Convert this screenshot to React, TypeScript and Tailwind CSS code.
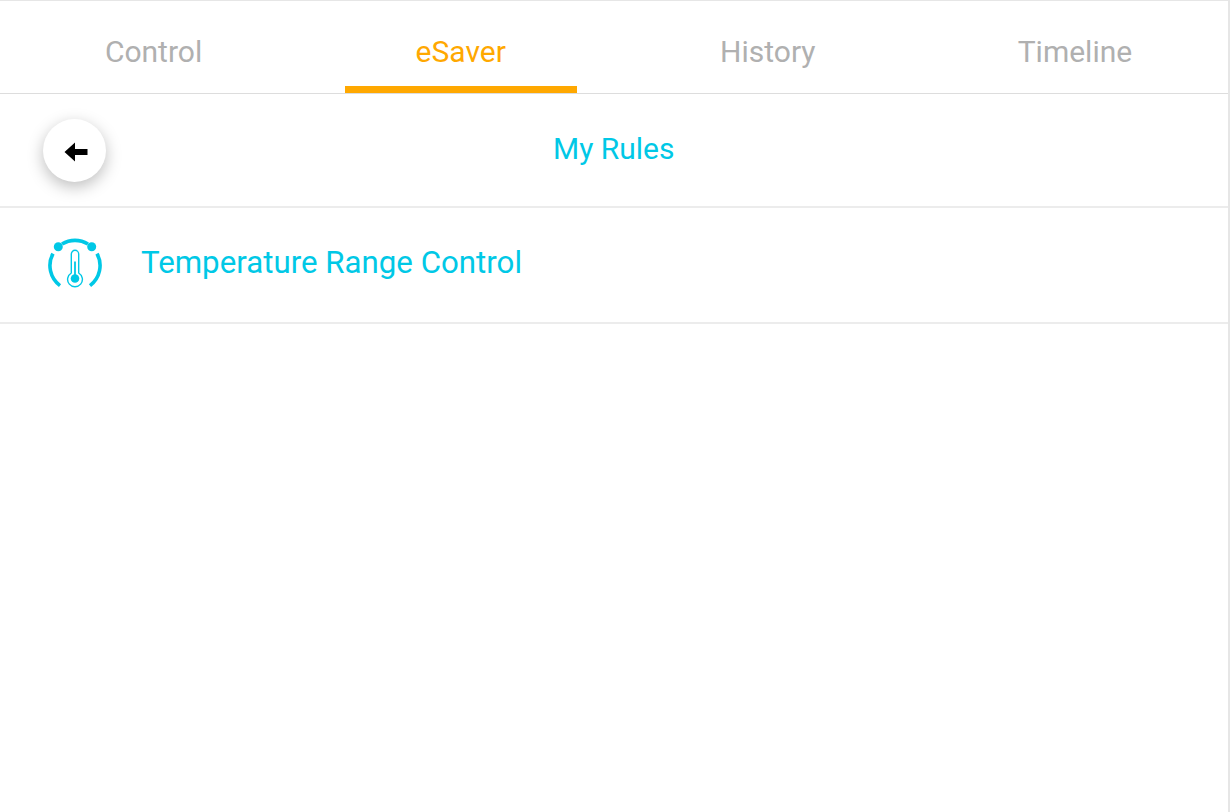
import React from "react";

const tabs = ["Control", "eSaver", "History", "Timeline"];

const ThermoGauge = () => (
  <svg width="56" height="52" viewBox="0 0 56 52" fill="none" className="shrink-0 text-[#00c8e6]">
    <path d="M6 17.6 A25 25 0 0 0 13 49.6" stroke="currentColor" strokeWidth="3.6" />
    <path d="M50 17.6 A25 25 0 0 1 43 49.6" stroke="currentColor" strokeWidth="3.6" />
    <path d="M15 8 A25 25 0 0 1 41 8" stroke="currentColor" strokeWidth="3.6" />
    <circle cx="11.3" cy="10.7" r="4.5" fill="currentColor" />
    <circle cx="44.7" cy="10.7" r="4.5" fill="currentColor" />
    <path
      d="M24.3 18 a3.7 3.7 0 0 1 7.4 0 V37 a7.4 7.4 0 1 1 -7.4 0 Z"
      stroke="currentColor"
      strokeWidth="1.4"
      strokeLinejoin="round"
    />
    <path d="M28 25.5 V40" stroke="currentColor" strokeWidth="1.8" />
    <circle cx="28" cy="42.5" r="4.3" fill="currentColor" />
  </svg>
);

export default function App() {
  return (
    <div className="h-[812px] w-[1230px] bg-white font-['Roboto',sans-serif]">
      <div className="h-full w-[1229.5px] border-t border-r-2 border-[#e6e6e6]">
        <div className="h-[92px] border-b border-[#dddddd] box-content">
          <div className="-mr-[1px] flex h-full">
            {tabs.map((tab) => {
              const active = tab === "eSaver";
              return (
                <div key={tab} className="relative flex flex-1 items-center justify-center pt-2">
                  <span className={`text-[30px] ${active ? "text-[#ffa800]" : "text-[#b0b0b0]"}`}>{tab}</span>
                  {active && <div className="absolute bottom-0 left-[38px] right-[37px] h-[7px] bg-[#ffa800]" />}
                </div>
              );
            })}
          </div>
        </div>

        <div className="relative flex h-[114px] items-center justify-center border-b-2 border-[#ececec] pb-1">
          <button className="absolute left-[43px] top-[25px] flex h-[63px] w-[63px] items-center justify-center rounded-full bg-white shadow-[0_5px_16px_rgba(0,0,0,0.26)]">
            <svg width="24" height="20" viewBox="0 0 24 20" className="ml-[3px] mt-[3px]">
              <path d="M0.5 10 L11 0.5 V7 H23.5 V13 H11 V19.5 Z" fill="#000000" />
            </svg>
          </button>
          <span className="text-[30px] text-[#00c8e6]">My Rules</span>
        </div>

        <div className="flex h-[116px] items-center gap-[38px] border-b-2 border-[#ececec] pb-[6px] pl-[47px]">
          <ThermoGauge />
          <span className="mt-[2px] text-[31.25px] text-[#00c8e6]">Temperature Range Control</span>
        </div>
      </div>
    </div>
  );
}
